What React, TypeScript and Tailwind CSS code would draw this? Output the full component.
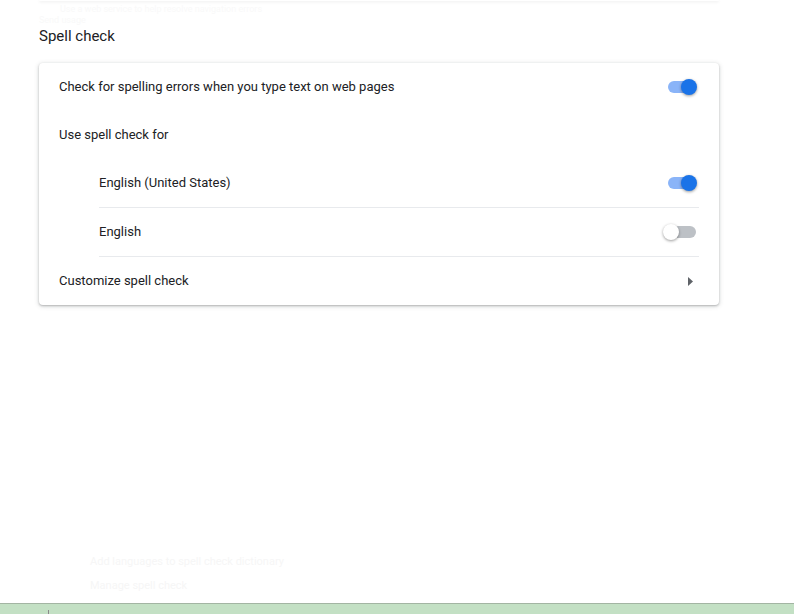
import React from "react";

function Toggle({ on }: { on: boolean }) {
  return (
    <div className="relative w-[34px] h-[16px] flex items-center">
      <div
        className={`absolute left-[3px] w-[28px] h-[12px] rounded-full ${
          on ? "bg-[#8ab4f8]" : "bg-[#bdc1c6]"
        }`}
      />
      <div
        className={`absolute top-0 w-[16px] h-[16px] rounded-full shadow-[0_1px_3px_rgba(0,0,0,0.4)] ${
          on ? "left-[16px] bg-[#1a73e8]" : "left-[-2px] bg-white"
        }`}
      />
    </div>
  );
}

export default function App() {
  return (
    <div
      className="w-[794px] h-[614px] bg-white flex flex-col overflow-hidden text-[#202124]"
      style={{ fontFamily: "Roboto, 'Liberation Sans', sans-serif" }}
    >
      <div className="ml-[39px] w-[680px] h-[1px] rounded-b shadow-[0_1px_3px_rgba(0,0,0,0.12)]" />
      <div className="ml-[60px] mt-[3px] text-[9px] leading-[11px] text-[#f9f9f9]">
        Use a web service to help resolve navigation errors
      </div>
      <div className="ml-[39px] text-[9px] leading-[11px] text-[#f9f9f9]">Send usage</div>
      <div className="ml-[39px] text-[15px] leading-[20px]">Spell check</div>

      <div className="ml-[39px] mt-[17px] w-[680px] rounded-[4px] bg-white shadow-[0_1px_2px_rgba(60,64,67,0.3),0_1px_4px_1px_rgba(60,64,67,0.15)] text-[13px]">
        <div className="h-[48px] px-[20px] flex items-center justify-between">
          <span>Check for spelling errors when you type text on web pages</span>
          <Toggle on />
        </div>
        <div className="h-[48px] px-[20px] flex items-center">
          <span>Use spell check for</span>
        </div>
        <div className="ml-[60px] mr-[20px]">
          <div className="h-[49px] flex items-center justify-between border-b border-[#e8eaed]">
            <span>English (United States)</span>
            <Toggle on />
          </div>
          <div className="h-[49px] flex items-center justify-between border-b border-[#e8eaed]">
            <span>English</span>
            <Toggle on={false} />
          </div>
        </div>
        <div className="h-[48px] pl-[20px] pr-[26px] flex items-center justify-between">
          <span>Customize spell check</span>
          <svg width="5" height="9" viewBox="0 0 5 9">
            <path d="M0 0 L5 4.5 L0 9 Z" fill="#5f6368" />
          </svg>
        </div>
      </div>

      <div className="flex-1" />
      <div className="ml-[90px] text-[11px] leading-[11px] text-[#f6f6f6]">
        Add languages to spell check dictionary
      </div>
      <div className="ml-[90px] mt-[13px] text-[11px] leading-[11px] text-[#f6f6f6]">
        Manage spell check
      </div>
      <div className="h-[12px]" />
      <div className="h-[11px] border-t border-[#a3b5a3] bg-[#c3e0c4] flex">
        <div className="ml-[48px] mt-[6px] w-[1px] h-[5px] bg-[#8a8a8a]" />
      </div>
    </div>
  );
}
